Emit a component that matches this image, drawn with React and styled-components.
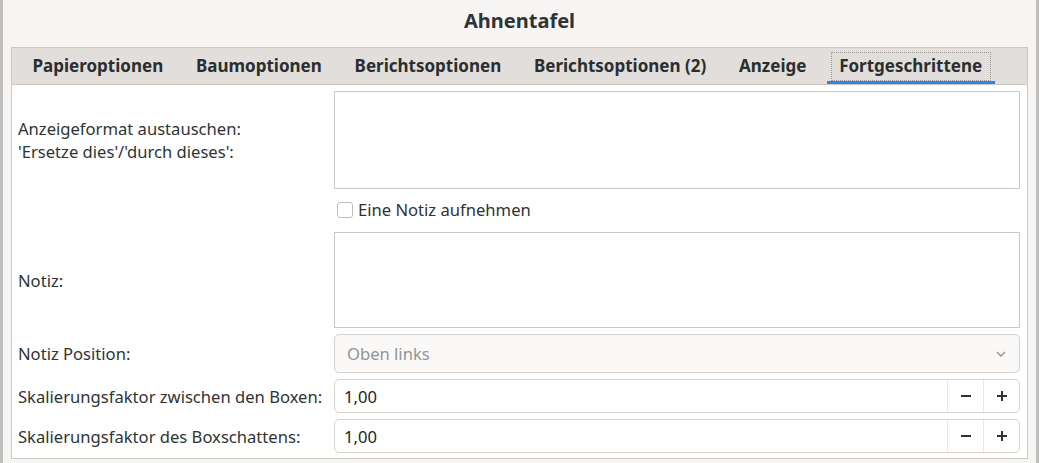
import React from 'react';
import styled, { createGlobalStyle } from 'styled-components';

const Global = createGlobalStyle`
  html, body { margin: 0; padding: 0; background: #f6f5f4; }
  body { font-family: "Noto Sans", "Open Sans", sans-serif; color: #2e3436; }
  * { box-sizing: border-box; }
`;

const Window = styled.div`
  width: 1039px;
  height: 463px;
  border-left: 3px solid #c0bebc;
  border-right: 3px solid #c0bebc;
  background: #f6f5f4;
  display: flex;
  flex-direction: column;
`;

const Header = styled.div`
  height: 47px;
  display: flex;
  justify-content: center;
  align-items: flex-start;
  padding-top: 7px;
  font-weight: 700;
  font-size: 20px;
  line-height: 28px;
  color: #2e3436;
`;

const Notebook = styled.div`
  margin: 0 8px;
  border: 1px solid #cdc7c2;
  background: #fff;
  display: flex;
  flex-direction: column;
`;

const TabBar = styled.div`
  display: flex;
  height: 37px;
  background: #e1dedb;
  border-bottom: 1px solid #cdc7c2;
  padding-left: 8px;
  gap: 7.8px;
`;

const Tab = styled.div`
  position: relative;
  padding: 0 12.5px 1px;
  display: flex;
  align-items: center;
  font-weight: 700;
  font-size: 17px;
  white-space: nowrap;
  color: #2a2e30;
  box-shadow: ${(p) => (p.$active ? 'inset 0 -3px 0 #3584e4' : 'none')};
  &::before {
    content: '';
    display: ${(p) => (p.$active ? 'block' : 'none')};
    position: absolute;
    left: 4px;
    right: 4px;
    top: 4px;
    bottom: 3px;
    border: 1px dotted #9a9896;
  }
`;

const Form = styled.div`
  display: grid;
  grid-template-columns: 316px 1fr;
  grid-template-rows: 98px 31px 96px 39px 34px 34px;
  row-gap: 6px;
  padding: 6px 7px 5px 6px;
  font-size: 16.6px;
`;

const Label = styled.div`
  align-self: center;
  line-height: 23px;
  color: #2e3436;
  white-space: nowrap;
`;

const TextBox = styled.div`
  border: 1px solid #cdc7c2;
  background: #fff;
`;

const CheckRow = styled.label`
  grid-column: 2;
  display: flex;
  align-items: center;
  gap: 5px;
  padding-left: 3px;
  padding-bottom: 2px;
`;

const CheckBox = styled.span`
  width: 16px;
  height: 16px;
  border: 1px solid #c3bfbb;
  border-radius: 3px;
  background: #fff;
`;

const Combo = styled.div`
  border: 1px solid #d6d1cd;
  border-radius: 5px;
  background: #faf9f8;
  color: #929595;
  display: flex;
  align-items: center;
  justify-content: space-between;
  padding: 0 13px 0 12px;
`;

const Spin = styled.div`
  border: 1px solid #d6d1cd;
  border-radius: 5px;
  background: #fff;
  display: flex;
  align-items: stretch;
`;

const SpinValue = styled.div`
  flex: 1;
  display: flex;
  align-items: center;
  padding-left: 9px;
  color: #1e1e1e;
`;

const SpinButton = styled.div`
  width: 36px;
  display: flex;
  align-items: center;
  justify-content: center;
  border-left: 1px solid #ebe9e7;
`;

const Minus = () => (
  <svg width="10" height="10" viewBox="0 0 10 10">
    <rect x="0" y="4" width="10" height="2" fill="#2e3436" />
  </svg>
);

const Plus = () => (
  <svg width="10" height="10" viewBox="0 0 10 10">
    <rect x="0" y="4" width="10" height="2" fill="#2e3436" />
    <rect x="4" y="0" width="2" height="10" fill="#2e3436" />
  </svg>
);

const Chevron = () => (
  <svg width="10" height="6" viewBox="0 0 10 6">
    <path d="M1 1 L5 5 L9 1" fill="none" stroke="#9a9a9a" strokeWidth="1.6" />
  </svg>
);

const tabs = ['Papieroptionen', 'Baumoptionen', 'Berichtsoptionen', 'Berichtsoptionen (2)', 'Anzeige', 'Fortgeschrittene'];

const SpinField = ({ value }) => (
  <Spin>
    <SpinValue>{value}</SpinValue>
    <SpinButton><Minus /></SpinButton>
    <SpinButton><Plus /></SpinButton>
  </Spin>
);

export default function App() {
  return (
    <>
      <Global />
      <Window>
        <Header>Ahnentafel</Header>
        <Notebook>
          <TabBar>
            {tabs.map((t, i) => (
              <Tab key={t} $active={i === tabs.length - 1}>{t}</Tab>
            ))}
          </TabBar>
          <Form>
            <Label>Anzeigeformat austauschen:<br />'Ersetze dies'/'durch dieses':</Label>
            <TextBox />
            <CheckRow><CheckBox />Eine Notiz aufnehmen</CheckRow>
            <Label>Notiz:</Label>
            <TextBox />
            <Label>Notiz Position:</Label>
            <Combo>Oben links<Chevron /></Combo>
            <Label>Skalierungsfaktor zwischen den Boxen:</Label>
            <SpinField value="1,00" />
            <Label>Skalierungsfaktor des Boxschattens:</Label>
            <SpinField value="1,00" />
          </Form>
        </Notebook>
      </Window>
    </>
  );
}
